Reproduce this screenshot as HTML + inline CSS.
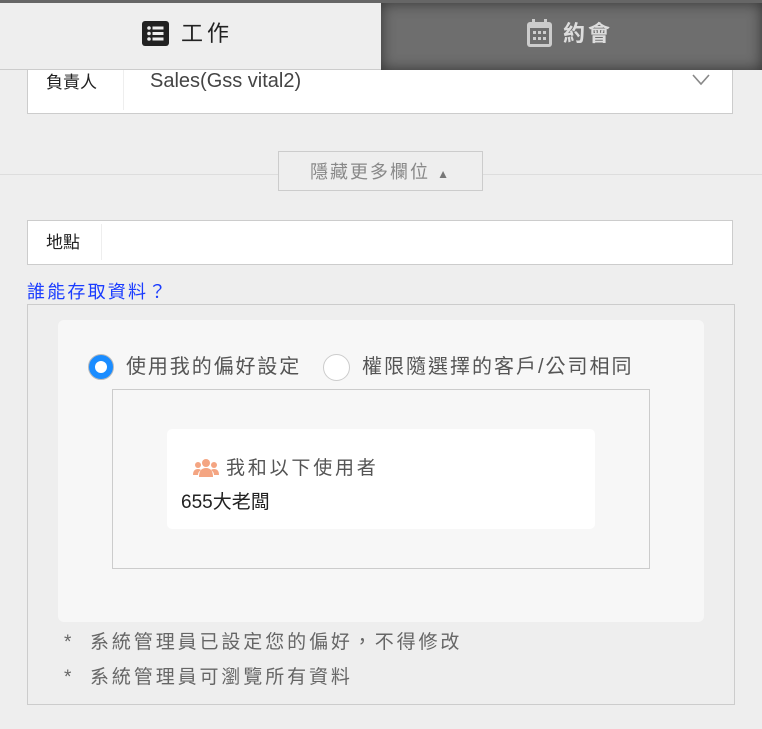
<!DOCTYPE html>
<html><head><meta charset="utf-8"><style>
*{box-sizing:border-box;margin:0;padding:0}
body{width:762px;height:729px;overflow:hidden;background:#eee;font-family:"Liberation Sans","Noto Sans CJK TC",sans-serif;position:relative;color:#333}
.a{position:absolute;line-height:1.2}
</style></head><body>
<div class="a" style="left:0;top:0;width:762px;height:3px;background:#666"></div>
<div class="a" style="left:0;top:3px;width:381px;height:67px;background:#eee;border-bottom:1px solid #ccc"></div>
<div class="a" style="left:381px;top:3px;width:381px;height:67px;background:#6e6e6e;box-shadow:inset 0 0 14px #333"></div>
<svg class="a" style="left:142px;top:21px" width="27" height="25" viewBox="0 0 27 25"><rect width="27" height="25" rx="3" fill="#222"/><g fill="#eee"><circle cx="7" cy="7" r="1.8"/><circle cx="7" cy="12.5" r="1.8"/><circle cx="7" cy="18" r="1.8"/><rect x="10.5" y="5.5" width="11" height="3"/><rect x="10.5" y="11" width="11" height="3"/><rect x="10.5" y="16.5" width="11" height="3"/></g></svg>
<div class="a" style="left:181px;top:21px;font-size:22px;color:#222;letter-spacing:4px">工作</div>
<svg class="a" style="left:527px;top:19px" width="25" height="28" viewBox="0 0 25 28"><rect x="5" y="0" width="3" height="6" fill="#ccc"/><rect x="17" y="0" width="3" height="6" fill="#ccc"/><rect x="0" y="3" width="25" height="25" rx="3" fill="#ccc"/><rect x="3" y="9" width="19" height="16" fill="#6e6e6e"/><g fill="#ccc"><rect x="6" y="12" width="3" height="3"/><rect x="11" y="12" width="3" height="3"/><rect x="16" y="12" width="3" height="3"/><rect x="6" y="18" width="3" height="3"/><rect x="11" y="18" width="3" height="3"/><rect x="16" y="18" width="3" height="3"/></g></svg>
<div class="a" style="left:563px;top:21px;font-size:22px;color:#ddd;font-weight:bold;letter-spacing:3px">約會</div>

<div class="a" style="left:27px;top:70px;width:706px;height:44px;background:#fff;border:1px solid #ccc;border-top:none"></div>
<div class="a" style="left:46px;top:73px;font-size:17px;color:#222">負責人</div>
<div class="a" style="left:123px;top:70px;width:1px;height:40px;background:#eee"></div>
<div class="a" style="left:150px;top:69px;font-size:20px;color:#444">Sales(Gss vital2)</div>
<svg class="a" style="left:692px;top:74px" width="18" height="12"><path d="M1 1 L9 10 L17 1" stroke="#888" stroke-width="1.6" fill="none"/></svg>

<div class="a" style="left:0;top:174px;width:762px;height:1px;background:#ddd"></div>
<div class="a" style="left:278px;top:151px;width:205px;height:40px;background:#eee;border:1px solid #ccc;text-align:center;line-height:40px;font-size:18px;color:#888;letter-spacing:2px">隱藏更多欄位 <span style="font-size:12px;color:#777">▲</span></div>

<div class="a" style="left:27px;top:220px;width:706px;height:45px;background:#fff;border:1px solid #ccc"></div>
<div class="a" style="left:46px;top:233px;font-size:17px;color:#222">地點</div>
<div class="a" style="left:101px;top:224px;width:1px;height:36px;background:#eee"></div>
<div class="a" style="left:27px;top:282px;font-size:18px;color:#1a3cff;letter-spacing:2.2px">誰能存取資料？</div>

<div class="a" style="left:27px;top:304px;width:708px;height:401px;border:1px solid #ccc;background:#eee"></div>
<div class="a" style="left:58px;top:320px;width:646px;height:302px;background:#f7f7f7;border-radius:6px"></div>
<div class="a" style="left:88px;top:354px;width:26px;height:26px;border-radius:50%;background:#1a8cff;border:1px solid #bbb"></div>
<div class="a" style="left:95px;top:361px;width:12px;height:12px;border-radius:50%;background:#fff"></div>
<div class="a" style="left:126px;top:355px;font-size:20px;color:#555;letter-spacing:1.9px">使用我的偏好設定</div>
<div class="a" style="left:323px;top:354px;width:27px;height:27px;border-radius:50%;background:#fff;border:1.5px solid #ccc"></div>
<div class="a" style="left:362px;top:355px;font-size:20px;color:#555;letter-spacing:2px">權限隨選擇的客戶/公司相同</div>
<div class="a" style="left:112px;top:389px;width:538px;height:180px;border:1px solid #ccc;background:#f7f7f7"></div>
<div class="a" style="left:167px;top:429px;width:428px;height:100px;background:#fff;border-radius:5px"></div>
<svg class="a" style="left:193px;top:459px" width="26" height="18" viewBox="0 0 26 18"><g fill="#f4a582"><circle cx="13" cy="4" r="4"/><circle cx="5" cy="6" r="3"/><circle cx="21" cy="6" r="3"/><path d="M6 18 Q6 9 13 9 Q20 9 20 18Z"/><path d="M0 16 Q0 10 5 10 Q7 10 8 11 Q5 13 5 16Z"/><path d="M26 16 Q26 10 21 10 Q19 10 18 11 Q21 13 21 16Z"/></g></svg>
<div class="a" style="left:226px;top:458px;font-size:19px;color:#555;letter-spacing:2.8px">我和以下使用者</div>
<div class="a" style="left:181px;top:492px;font-size:19px;color:#222">655大老闆</div>

<div class="a" style="left:64px;top:632px;font-size:19px;color:#666">*<span style="position:absolute;left:26px;letter-spacing:2.9px;white-space:nowrap">系統管理員已設定您的偏好，不得修改</span></div>
<div class="a" style="left:64px;top:667px;font-size:19px;color:#666">*<span style="position:absolute;left:26px;letter-spacing:2.9px;white-space:nowrap">系統管理員可瀏覽所有資料</span></div>
</body></html>
